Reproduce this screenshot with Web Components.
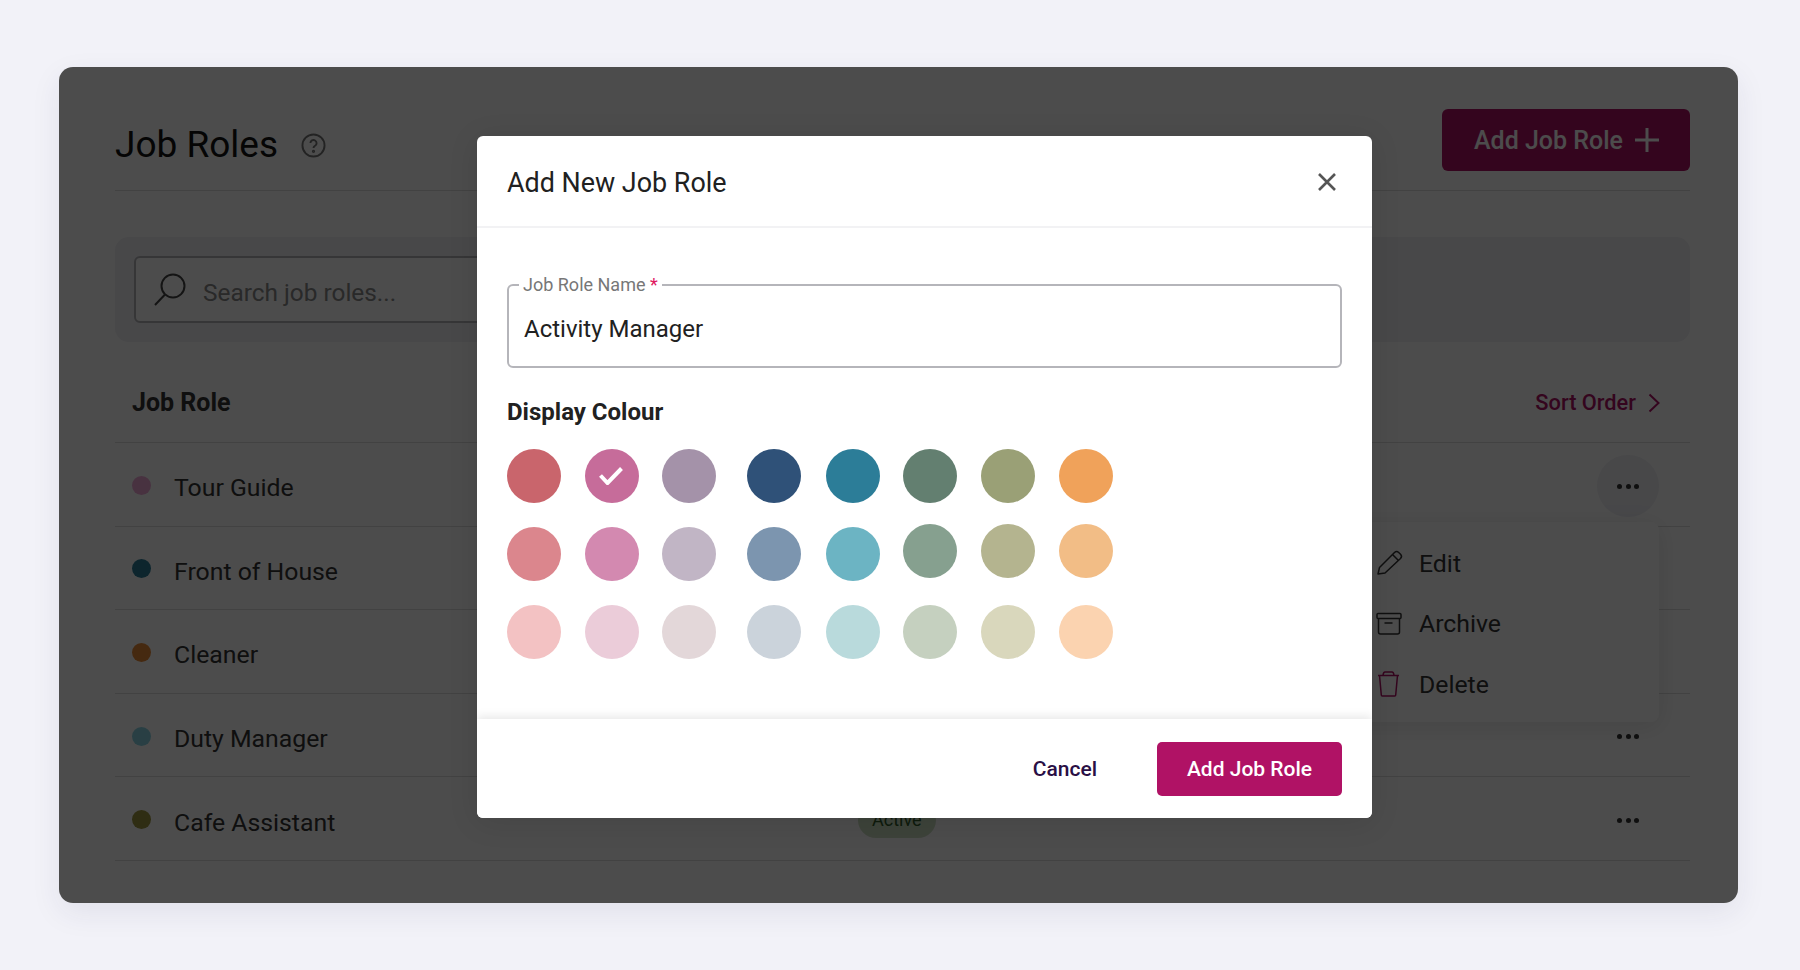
<!DOCTYPE html>
<html>
<head>
<meta charset="utf-8">
<title>Job Roles</title>
<style>
html, body { margin: 0; height: 100%; }
body {
  background: #f2f2f8;
  font-family: Roboto, "Liberation Sans", sans-serif;
  color: #212121;
}
</style>
</head>
<body>
<app-shell>
  <page-header slot="content" heading="Job Roles"></page-header>
  <search-band slot="content" placeholder="Search job roles..."></search-band>
  <role-table slot="content">
    <role-row color="#f0a8d8" name="Tour Guide" open>
      <row-menu slot="menu">
        <menu-entry icon="edit">Edit</menu-entry>
        <menu-entry icon="archive">Archive</menu-entry>
        <menu-entry icon="delete">Delete</menu-entry>
      </row-menu>
    </role-row>
    <role-row color="#2c7d98" name="Front of House"></role-row>
    <role-row color="#e88a38" name="Cleaner"></role-row>
    <role-row color="#8ad4e4" name="Duty Manager"></role-row>
    <role-row color="#9e9740" name="Cafe Assistant" status="Active"></role-row>
  </role-table>
  <modal-dialog slot="modal" heading="Add New Job Role">
    <text-field label="Job Role Name" value="Activity Manager" required></text-field>
    <colour-picker title="Display Colour"></colour-picker>
    <action-button slot="footer" kind="text">Cancel</action-button>
    <action-button slot="footer" kind="primary">Add Job Role</action-button>
  </modal-dialog>
</app-shell>

<script>
const icons = {
  edit: `<svg width="28" height="28" viewBox="0 0 28 28" fill="none" stroke="currentColor" stroke-width="1.500" stroke-linejoin="round"><path d="M2 25l1.500-6.500L18.500 3.500a3 3 0 0 1 4.200 0l1.800 1.800a3 3 0 0 1 0 4.200L9 24z"/><path d="M16.500 5.500l6 6"/></svg>`,
  archive: `<svg width="28" height="28" viewBox="0 0 28 28" fill="none" stroke="currentColor" stroke-width="1.500" stroke-linejoin="round"><rect x="1" y="3.500" width="24" height="5" rx="1"/><path d="M2.500 8.500v13.500a2 2 0 0 0 2 2h17a2 2 0 0 0 2-2V8.500"/><path d="M8.500 13h8"/></svg>`,
  delete: `<svg width="28" height="28" viewBox="0 0 28 28" fill="none" stroke="currentColor" stroke-width="1.500" stroke-linejoin="round"><path d="M2 5.500h21"/><path d="M7 5.500c.2-2 1-3.500 2-3.500h7c1 0 1.800 1.500 2 3.500"/><path d="M3.500 5.500l1.800 19.500a1 1 0 0 0 1 1h12.400a1 1 0 0 0 1-1L21.500 5.500"/></svg>`,
};

class AppShell extends HTMLElement {
  constructor() {
    super();
    this.attachShadow({ mode: "open" });
    this.shadowRoot.innerHTML = `
<style>
:host { display: block; padding: 67px 62px 0 59px; }
.card {
  position: relative;
  height: 836px;
  box-sizing: border-box;
  padding: 42px 48px 0 56px;
  background: #fff;
  border-radius: 14px;
  box-shadow: 0 10px 30px rgba(40, 40, 90, 0.08);
  overflow: hidden;
}
.overlay {
  position: absolute;
  z-index: 3;
  inset: 0;
  background: rgba(0, 0, 0, 0.7);
}
</style>
<div class="card">
  <slot name="content"></slot>
  <div class="overlay"></div>
  <slot name="modal"></slot>
</div>`;
  }
}

class PageHeader extends HTMLElement {
  constructor() {
    super();
    this.attachShadow({ mode: "open" });
    this.shadowRoot.innerHTML = `
<style>
:host { display: flex; align-items: center; height: 81px; border-bottom: 1px solid #ddd; }
h1 { margin: 0; font-size: 37px; font-weight: 400; color: #111; position: relative; top: -5px; }
.help { margin-left: 23px; width: 25px; height: 25px; color: #777; position: relative; top: -4px; }
.add {
  margin-left: auto;
  position: relative;
  top: -10px;
  width: 248px;
  height: 62px;
  box-sizing: border-box;
  padding-left: 32px;
  display: flex;
  align-items: center;
  gap: 10px;
  background: #b01265;
  border-radius: 6px;
  color: #fff;
  font-size: 25px;
  font-weight: 500;
}
.add span { margin-top: 2px; }
</style>
<h1></h1>
<svg class="help" viewBox="0 0 26 26" fill="none" stroke="currentColor" stroke-width="2"><circle cx="13" cy="13" r="11.500"/><path d="M9.800 10.500a3.200 3.200 0 1 1 4.800 2.800c-1 .6-1.600 1.200-1.600 2.300"/><circle cx="13" cy="19" r=".7"/></svg>
<div class="add"><span>Add Job Role</span><svg width="28" height="28" viewBox="0 0 28 28" stroke="currentColor" stroke-width="3"><path d="M14 2v24M2 14h24"/></svg></div>`;
    this.shadowRoot.querySelector("h1").textContent = this.getAttribute("heading");
  }
}

class SearchBand extends HTMLElement {
  constructor() {
    super();
    this.attachShadow({ mode: "open" });
    this.shadowRoot.innerHTML = `
<style>
:host {
  display: block;
  margin-top: 46px;
  height: 105px;
  box-sizing: border-box;
  padding: 19px;
  background: #f0f0f5;
  border-radius: 14px;
}
.box {
  display: flex;
  align-items: center;
  width: 720px;
  height: 67px;
  box-sizing: border-box;
  padding-left: 17px;
  gap: 16px;
  background: #fff;
  border: 2px solid #b5b5ba;
  border-radius: 6px;
  font-size: 24.400px;
  color: #8a8a8a;
}
svg { color: #444; }
span { margin-top: 6px; }
</style>
<div class="box">
  <svg width="34" height="34" viewBox="0 0 34 34" fill="none" stroke="currentColor" stroke-width="2"><circle cx="20" cy="13" r="11.500"/><path d="M12 21.500L2 32"/></svg>
  <span></span>
</div>`;
    this.shadowRoot.querySelector("span").textContent = this.getAttribute("placeholder");
  }
}

class RoleTable extends HTMLElement {
  constructor() {
    super();
    this.attachShadow({ mode: "open" });
    this.shadowRoot.innerHTML = `
<style>
:host { display: block; }
.head {
  display: flex;
  align-items: center;
  height: 101px;
  box-sizing: border-box;
  padding: 21px 30px 0 17px;
  border-bottom: 1px solid #ddd;
}
.title { font-size: 25px; font-weight: 700; color: #333; }
.sort {
  margin-left: auto;
  display: flex;
  align-items: center;
  gap: 12px;
  font-size: 21.800px;
  font-weight: 500;
  color: #b01265;
}
</style>
<div class="head">
  <div class="title">Job Role</div>
  <div class="sort"><span>Sort Order</span><svg width="12" height="20" viewBox="0 0 12 20" fill="none" stroke="currentColor" stroke-width="2"><path d="M1.500 1.500l9 8.500-9 8.500"/></svg></div>
</div>
<slot></slot>`;
  }
}

class RoleRow extends HTMLElement {
  constructor() {
    super();
    this.attachShadow({ mode: "open" });
    const status = this.getAttribute("status");
    this.shadowRoot.innerHTML = `
<style>
:host {
  display: flex;
  align-items: center;
  position: relative;
  height: 83.600px;
  box-sizing: border-box;
  padding: 0 30px 0 17px;
  border-bottom: 1px solid #ddd;
}
.dot { width: 19px; height: 19px; border-radius: 50%; margin-top: 2px; }
.name { margin: 7px 0 0 23px; font-size: 24.800px; color: #333; width: 684px; }
.pill {
  margin-top: 3px;
  padding: 7px 14px;
  border-radius: 18px;
  background: #cde0c3;
  color: #2f5a2a;
  font-size: 18px;
  line-height: 22px;
}
.more {
  position: absolute;
  right: 31px;
  top: 12px;
  width: 62px;
  height: 62px;
  border-radius: 50%;
  display: flex;
  align-items: center;
  justify-content: center;
  gap: 3.700px;
}
.more.open { background: #f0f0f5; }
.more i { width: 5px; height: 5px; border-radius: 50%; background: #333; }
</style>
<span class="dot"></span>
<span class="name"></span>
${status ? `<span class="pill">${status}</span>` : ""}
<div class="more"><i></i><i></i><i></i></div>
<slot name="menu"></slot>`;
    this.shadowRoot.querySelector(".dot").style.background = this.getAttribute("color");
    this.shadowRoot.querySelector(".name").textContent = this.getAttribute("name");
    if (this.hasAttribute("open")) this.shadowRoot.querySelector(".more").classList.add("open");
  }
}

class RowMenu extends HTMLElement {
  constructor() {
    super();
    this.attachShadow({ mode: "open" });
    this.shadowRoot.innerHTML = `
<style>
:host {
  position: absolute;
  z-index: 2;
  right: 31px;
  top: 79px;
  width: 320px;
  height: 200px;
  box-sizing: border-box;
  padding: 11px 0 0 37px;
  background: #fff;
  border-radius: 8px;
  box-shadow: 0 4px 24px rgba(0, 0, 0, 0.1);
}
</style>
<slot></slot>`;
  }
}

class MenuEntry extends HTMLElement {
  constructor() {
    super();
    this.attachShadow({ mode: "open" });
    const icon = this.getAttribute("icon");
    this.shadowRoot.innerHTML = `
<style>
:host {
  display: flex;
  align-items: center;
  gap: 15px;
  height: 60.500px;
  font-size: 24.800px;
  color: #333;
}
.icon { display: flex; width: 28px; height: 28px; color: ${icon === "delete" ? "#b01265" : "#333"}; }
</style>
<span class="icon">${icons[icon]}</span>
<slot></slot>`;
  }
}

class ModalDialog extends HTMLElement {
  constructor() {
    super();
    this.attachShadow({ mode: "open" });
    this.shadowRoot.innerHTML = `
<style>
:host {
  position: absolute;
  z-index: 4;
  left: 418px;
  top: 69px;
  width: 895px;
  height: 682px;
  display: flex;
  flex-direction: column;
  background: #fff;
  border-radius: 6px;
  overflow: hidden;
  box-shadow: 0 4px 30px rgba(0, 0, 0, 0.1);
}
header {
  display: flex;
  align-items: center;
  justify-content: space-between;
  height: 92px;
  box-sizing: border-box;
  padding: 3px 36px 0 30px;
  border-bottom: 2px solid #f2f2f4;
  font-size: 26.900px;
  color: #212121;
}
header svg { margin-top: -2px; }
main { flex: 1; padding: 48px 30px 0; }
footer {
  display: flex;
  align-items: center;
  justify-content: flex-end;
  gap: 60px;
  height: 99px;
  box-sizing: border-box;
  padding: 0 30px 0 0;
  background: #fff;
  box-shadow: 0 -3px 9px rgba(0, 0, 0, 0.09);
}
</style>
<header>
  <span id="title"></span>
  <svg width="18" height="18" viewBox="0 0 18 18" stroke="#555" stroke-width="2.600"><path d="M1 1l16 16M17 1L1 17"/></svg>
</header>
<main><slot></slot></main>
<footer><slot name="footer"></slot></footer>`;
    this.shadowRoot.querySelector("#title").textContent = this.getAttribute("heading");
  }
}

class TextField extends HTMLElement {
  constructor() {
    super();
    this.attachShadow({ mode: "open" });
    this.shadowRoot.innerHTML = `
<style>
:host { display: block; }
fieldset {
  margin: 0;
  height: 92px;
  box-sizing: border-box;
  padding: 0 0 0 15px;
  border: 2px solid #b5b5ba;
  border-radius: 6px;
}
legend {
  margin-left: -5px;
  padding: 0 4px;
  font-size: 18px;
  line-height: 18px;
  color: #777;
}
legend b { color: #e0185f; font-weight: 400; }
.value { font-size: 24px; line-height: 28px; color: #212121; margin-top: 21px; }
</style>
<fieldset>
  <legend><span id="label"></span> <b>*</b></legend>
  <div class="value"></div>
</fieldset>`;
    this.shadowRoot.querySelector("#label").textContent = this.getAttribute("label");
    this.shadowRoot.querySelector(".value").textContent = this.getAttribute("value");
  }
}

const palette = [
  ["#c9656c", "#c66c9a", "#a492a9", "#2f5178", "#2c7d98", "#637f70", "#9aa076", "#f0a25a"],
  ["#db868d", "#d389b0", "#c1b5c5", "#7c95af", "#6cb4c3", "#86a08f", "#b4b48f", "#f2bd86"],
  ["#f3c2c3", "#ebccd9", "#e3d7d9", "#cbd3db", "#b9dadc", "#c5d0bf", "#d9d7bc", "#fbd3b0"],
];

class ColourPicker extends HTMLElement {
  constructor() {
    super();
    this.attachShadow({ mode: "open" });
    this.shadowRoot.innerHTML = `
<style>
:host { display: block; margin-top: 30px; }
h3 { margin: 0; font-size: 24px; line-height: 28px; font-weight: 700; color: #212121; }
.grid {
  display: grid;
  grid-template-columns: 78px 77px 85px 79px 77px 78px 78px 54px;
  grid-template-rows: 78px 78px 54px;
  margin-top: 23px;
}
.swatch {
  width: 54px;
  height: 54px;
  border-radius: 50%;
  display: flex;
  align-items: center;
  justify-content: center;
}
.swatch svg { margin-right: 3px; }
.raised { margin-top: -3px; }
</style>
<h3></h3>
<div class="grid"></div>`;
    this.shadowRoot.querySelector("h3").textContent = this.getAttribute("title");
    const grid = this.shadowRoot.querySelector(".grid");
    palette.forEach((row, r) => {
      row.forEach((colour, c) => {
        const swatch = document.createElement("div");
        swatch.className = "swatch";
        swatch.style.background = colour;
        if (r === 1 && c >= 5) swatch.classList.add("raised");
        if (r === 0 && c === 1) {
          swatch.innerHTML = `<svg width="24" height="18" viewBox="0 0 24 18" fill="none" stroke="#fff" stroke-width="4"><path d="M1.500 8.500l7 7.500L22.500 1.500"/></svg>`;
        }
        grid.appendChild(swatch);
      });
    });
  }
}

class ActionButton extends HTMLElement {
  constructor() {
    super();
    this.attachShadow({ mode: "open" });
    this.shadowRoot.innerHTML = `
<style>
:host {
  display: flex;
  align-items: center;
  justify-content: center;
  height: 54px;
  font-size: 21px;
  font-weight: 500;
  color: #2a0f45;
}
:host([kind="primary"]) {
  width: 185px;
  background: #b01265;
  color: #fff;
  border-radius: 5px;
}
</style>
<slot></slot>`;
  }
}

customElements.define("app-shell", AppShell);
customElements.define("page-header", PageHeader);
customElements.define("search-band", SearchBand);
customElements.define("role-table", RoleTable);
customElements.define("role-row", RoleRow);
customElements.define("row-menu", RowMenu);
customElements.define("menu-entry", MenuEntry);
customElements.define("modal-dialog", ModalDialog);
customElements.define("text-field", TextField);
customElements.define("colour-picker", ColourPicker);
customElements.define("action-button", ActionButton);
</script>
</body>
</html>
